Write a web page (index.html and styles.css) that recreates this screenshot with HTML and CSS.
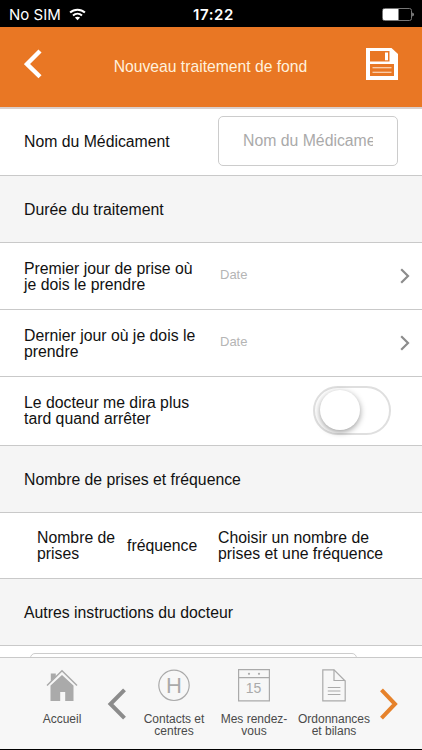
FILE: index.html
```html
<!DOCTYPE html>
<html lang="fr">
<head>
  <meta charset="UTF-8">
  <meta name="viewport" content="width=device-width, initial-scale=1.0">
  <title>Nouveau traitement de fond</title>
  <link rel="stylesheet" href="styles.css">
</head>
<body>
  <div class="status">
    <div class="carrier">
      <span>No SIM</span>
      <svg width="17" height="13" viewBox="0 0 17 13" fill="none" stroke="#fff" stroke-width="2">
        <path d="M1.1 4.6C5.2.8 11.8.8 15.9 4.6"/>
        <path d="M4 7.5c2.6-2.3 6.4-2.3 9 0"/>
        <path d="M8.5 12.2L5.9 9.6c1.5-1.2 3.7-1.2 5.2 0z" fill="#fff" stroke="none"/>
      </svg>
    </div>
    <span class="clock">17:22</span>
    <svg class="battery" width="32" height="14" viewBox="0 0 32 14">
      <rect x=".5" y=".5" width="29" height="12" rx="2" fill="none" stroke="#777"/>
      <path d="M2 1h14.500v11H2a1 1 0 0 1-1-1V2a1 1 0 0 1 1-1z" fill="#fff"/>
      <path d="M30.500 4.500c1.500.5 1.500 3.500 0 4z" fill="#ddd"/>
    </svg>
  </div>

  <header class="header">
    <svg width="18" height="30" viewBox="0 0 18 30">
      <path d="M16 2L3 15l13 12.800" fill="none" stroke="#fff" stroke-width="4.400"/>
    </svg>
    <h1>Nouveau traitement de fond</h1>
    <svg width="32" height="32" viewBox="0 0 32 32">
      <path d="M0 0h25.500L32 6v26H0z" fill="#fff"/>
      <path d="M4 3h19.500v10.500H4z" fill="#e97724"/>
      <path d="M20.500 4.500v7.800" stroke="#fff" stroke-width="3"/>
      <path d="M4 16h24v12H4z" fill="#e97724"/>
      <path d="M6.500 19.800h19M6.500 24.200h19" stroke="#ffe9d6" stroke-width="1.100"/>
    </svg>
  </header>

  <main class="form">
    <div class="row">
      <label class="label nom">Nom du Médicament</label>
      <div class="input"><span>Nom du Médicament</span></div>
    </div>
    <div class="row section">Durée du traitement</div>
    <div class="row">
      <div class="label">Premier jour de prise où<br>je dois le prendre</div>
      <span class="date">Date</span>
      <svg class="arrow" width="10" height="16" viewBox="0 0 10 16"><path d="M1.200 1.200L8 8l-6.800 6.800"/></svg>
    </div>
    <div class="row">
      <div class="label">Dernier jour où je dois le<br>prendre</div>
      <span class="date">Date</span>
      <svg class="arrow" width="10" height="16" viewBox="0 0 10 16"><path d="M1.200 1.200L8 8l-6.800 6.800"/></svg>
    </div>
    <div class="row tall">
      <div class="label">Le docteur me dira plus<br>tard quand arrêter</div>
      <div class="switch"><div class="knob"></div></div>
    </div>
    <div class="row section">Nombre de prises et fréquence</div>
    <div class="row prises">
      <span class="nombre">Nombre de<br>prises</span>
      <span class="freq">fréquence</span>
      <span class="choix">Choisir un nombre de<br>prises et une fréquence</span>
    </div>
    <div class="row section">Autres instructions du docteur</div>
    <div class="notes"><div class="textarea"></div></div>
  </main>

  <nav class="nav">
    <a class="item">
      <svg width="32" height="33" viewBox="0 0 32 33">
        <path d="M16 6l11.500 10.500V32h-8.300v-9h-5v9H4.500V16.500z" fill="#aaa"/>
        <path d="M1 16.500L16 1.800l15 14.700" fill="none" stroke="#f7f7f7" stroke-width="4"/>
        <path d="M4.800 12.500V4.500h5v3.200z" fill="#aaa"/>
        <path d="M1 16.500L16 1.800l15 14.700" fill="none" stroke="#aaa" stroke-width="1.500"/>
      </svg>
      <span>Accueil</span>
    </a>
    <svg class="prev" width="20" height="32" viewBox="0 0 20 32"><path d="M17.500 1.800L3.500 16l14 14.200"/></svg>
    <a class="item">
      <svg width="32" height="33" viewBox="0 0 32 33">
        <circle cx="16" cy="16.300" r="15.200" fill="none" stroke="#aaa" stroke-width="1.200"/>
        <text x="16" y="24.300" font-size="22" text-anchor="middle">H</text>
      </svg>
      <span>Contacts et<br>centres</span>
    </a>
    <a class="item">
      <svg width="32" height="33" viewBox="0 0 32 33">
        <path d="M.6.600h30.800v31.200H.6zM.6 8.600h30.800" fill="none" stroke="#aaa" stroke-width="1.200"/>
        <circle cx="11" cy="4.800" r="1.100" fill="#aaa"/>
        <circle cx="21" cy="4.800" r="1.100" fill="#aaa"/>
        <text x="15.500" y="24" font-size="14" text-anchor="middle">15</text>
      </svg>
      <span>Mes rendez-<br>vous</span>
    </a>
    <a class="item">
      <svg width="24" height="33" viewBox="0 0 24 33">
        <g fill="none" stroke="#aaa" stroke-width="1.200">
          <path d="M.8.800h11.200L23.200 12v19.800H.8z"/>
          <path d="M12 .8V11.500h11.200"/>
          <path d="M5.800 18.500h12.600M5.800 22h12.600M5.800 25.500h12.600"/>
        </g>
      </svg>
      <span>Ordonnances<br>et bilans</span>
    </a>
    <svg class="next" width="20" height="32" viewBox="0 0 20 32"><path d="M2.500 1.800L16 16 2.500 30.200"/></svg>
  </nav>
</body>
</html>
```

FILE: styles.css
```css
body {
  margin: 0;
  height: 750px;
  display: flex;
  flex-direction: column;
  overflow: hidden;
  background: #000;
  color: #111;
  font-family: "Liberation Sans", Arial, sans-serif;
  font-size: 15.8px;
  line-height: 16px;
}

svg {
  display: block;
  flex: none;
}

.status {
  height: 27px;
  flex: none;
  display: grid;
  grid-template-columns: 1fr auto 1fr;
  align-items: center;
  padding: 2px 8px 0 9px;
  box-sizing: border-box;
  color: #fff;
  font-family: Inter, sans-serif;
  font-size: 15px;
}

.carrier {
  display: flex;
  align-items: center;
  gap: 8px;
}

.clock {
  padding-left: 4px;
  font-weight: 600;
  letter-spacing: 0.6px;
}

.battery {
  justify-self: end;
}

.header {
  height: 82px;
  flex: none;
  box-sizing: border-box;
  display: flex;
  align-items: center;
  justify-content: space-between;
  padding: 0 24px 6px;
  background: #e97724;
  border-bottom: 2px solid #d9cfcd;
}

.header h1 {
  margin: 6px 0 0 13px;
  font-size: 15.7px;
  font-weight: normal;
  color: #fff1dc;
}

.form {
  height: 548px;
  flex: none;
  overflow: hidden;
  background: #fff;
}

.row {
  height: 67px;
  box-sizing: border-box;
  display: flex;
  align-items: center;
  padding: 0 12px 0 24px;
  border-bottom: 1px solid #c9c9c9;
  white-space: nowrap;
}

.row.section {
  padding-top: 2px;
  background: #f5f5f5;
}

.row.tall {
  height: 69px;
}

.row.prises {
  height: 66px;
  padding-left: 37px;
}

.label {
  width: 194px;
  padding-top: 2px;
}

.label.nom,
.tall .label {
  padding-top: 0;
}

.input {
  width: 180px;
  height: 50px;
  box-sizing: border-box;
  display: flex;
  align-items: center;
  margin-bottom: 2px;
  padding: 0 24px;
  border: 1px solid #ccc;
  border-radius: 5px;
  color: #aaa;
}

.input span {
  overflow: hidden;
  line-height: 20px;
}

.date {
  flex: 1;
  padding: 0 0 2px 2px;
  font-size: 13px;
  color: #b5b5b5;
}

.arrow path {
  fill: none;
  stroke: #8c8c8c;
  stroke-width: 2.2;
}

.switch {
  width: 78px;
  height: 49px;
  margin: 0 0 2px 95px;
  box-sizing: border-box;
  border: 2px solid #dfdfdf;
  border-radius: 25px;
  padding: 2px 5px;
}

.knob {
  width: 40px;
  height: 40px;
  border-radius: 50%;
  background: #fff;
  box-shadow: 0 2px 6px rgba(0, 0, 0, 0.4);
}

.nombre {
  width: 90px;
}

.freq {
  width: 91px;
}

.notes {
  padding: 7px 65px 0 30px;
}

.textarea {
  height: 60px;
  border: 1px solid #ccc;
  border-radius: 5px;
}

.nav {
  height: 92px;
  flex: none;
  box-sizing: border-box;
  display: flex;
  align-items: flex-start;
  background: #f7f7f7;
  border-top: 1px solid #c9c9c9;
  padding: 11px 0 0 22px;
  font-size: 12px;
  line-height: 12px;
  color: #4a4a4a;
}

.item {
  display: flex;
  flex-direction: column;
  align-items: center;
  width: 80px;
  gap: 11px;
  text-align: center;
  white-space: nowrap;
}

.item text {
  fill: #aaa;
}

.prev,
.next {
  margin-top: 19px;
  fill: none;
  stroke-width: 4;
}

.prev {
  stroke: #8c8c8c;
  margin-left: 5px;
  margin-right: 7px;
}

.next {
  stroke: #e6822b;
  margin-left: 5px;
}
```
